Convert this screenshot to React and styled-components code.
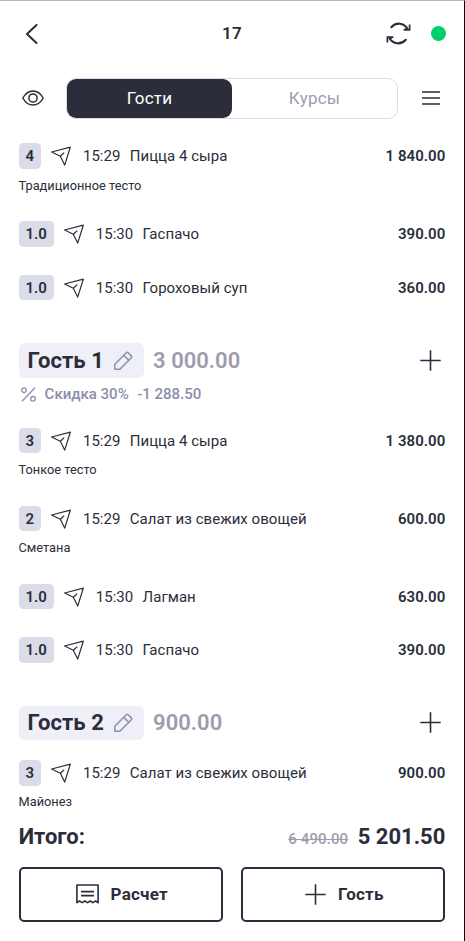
import styled, { createGlobalStyle } from "styled-components";

const colors = {
  dark: "#2b2e3a",
  muted: "#9f9bae",
  discount: "#8b8eac",
  badge: "#dadce9",
  light: "#efeff7",
  border: "#dbdbe9",
  green: "#00d06c",
};

const GlobalStyle = createGlobalStyle`
  * {
    box-sizing: border-box;
  }

  body {
    margin: 0;
    background: #fff;
    color: ${colors.dark};
    font-family: Roboto, "Liberation Sans", sans-serif;
  }

  button {
    padding: 0;
    border: 0;
    background: none;
    color: inherit;
    font-family: inherit;
  }

  svg {
    display: block;
    flex-shrink: 0;
    fill: none;
    stroke: currentColor;
  }
`;

const Screen = styled.div`
  display: flex;
  flex-direction: column;
  width: 465px;
  height: 941px;
  border-top: 1px solid #b7b7b7;
  border-right: 1px solid #06061f;
  background: #fff;
  overflow: hidden;
`;

const Header = styled.header`
  display: grid;
  grid-template-columns: 1fr auto 1fr;
  align-items: center;
  flex-shrink: 0;
  height: 65px;
  padding: 0 18px 0 24px;
`;

const Title = styled.h1`
  margin: -2px 0 0;
  padding-right: 6px;
  font-size: 17px;
  font-weight: 600;
  letter-spacing: 0.2px;
`;

const HeaderActions = styled.div`
  display: flex;
  justify-content: flex-end;
  align-items: center;
  gap: 20px;
`;

const StatusDot = styled.span`
  width: 15px;
  height: 15px;
  border-radius: 50%;
  background: ${colors.green};
`;

const Toolbar = styled.div`
  display: flex;
  align-items: center;
  flex-shrink: 0;
  height: 63.5px;
  padding: 1px 24px 0 22px;
`;

const Tabs = styled.div`
  display: flex;
  width: 332px;
  height: 41px;
  margin: 0 auto 0 22px;
  border: 1px solid ${colors.border};
  border-radius: 10px;
`;

const Tab = styled.button`
  flex: 1;
  border-radius: 9px;
  background: ${({ $active }) => ($active ? colors.dark : "transparent")};
  color: ${({ $active }) => ($active ? "#fff" : colors.muted)};
  font-size: 17px;
  letter-spacing: 0.2px;
`;

const List = styled.main`
  flex: 1;
  min-height: 0;
  overflow: hidden;
  padding: 0 18.7px 0 18.5px;
`;

const Item = styled.div`
  height: ${({ $tall }) => ($tall ? "78px" : "53.4px")};
`;

const ItemRow = styled.div`
  display: flex;
  align-items: center;
  height: 53.4px;
  font-size: 15px;
`;

const Badge = styled.span`
  display: flex;
  align-items: center;
  justify-content: center;
  height: 25.5px;
  margin-right: 10.1px;
  padding: 0 6.9px;
  border-radius: 4.5px;
  background: ${colors.badge};
  font-weight: 600;
`;

const Time = styled.span`
  margin: 0 9.4px 0 12px;
`;

const Name = styled.span`
  flex: 1;
  letter-spacing: 0.04px;
`;

const Price = styled.span`
  font-weight: 600;
  letter-spacing: 0.05px;
`;

const Note = styled.div`
  margin-top: -6.4px;
  font-size: 12.8px;
  line-height: 18px;
`;

const GuestHeader = styled.div`
  display: flex;
  align-items: center;
  height: 34.6px;
  margin-top: 29px;
  padding-right: 4px;
`;

const GuestName = styled.div`
  display: flex;
  align-items: center;
  gap: 10px;
  height: 100%;
  padding: 0 11px 0 9px;
  border-radius: 6px;
  background: ${colors.light};
  font-size: 22px;
  font-weight: 700;
  letter-spacing: 0.05px;

  svg {
    color: ${colors.discount};
  }
`;

const GuestSum = styled.span`
  flex: 1;
  margin-left: 9.3px;
  color: ${colors.muted};
  font-size: 22px;
  font-weight: 600;
`;

const Discount = styled.div`
  display: flex;
  align-items: center;
  gap: 8.5px;
  height: 30px;
  padding: 3px 0 0 2.6px;
  color: ${colors.discount};
  font-size: 15px;
  font-weight: 500;
`;

const GuestItems = styled.div`
  padding-top: 6px;
`;

const Footer = styled.footer`
  flex-shrink: 0;
  height: 130px;
  padding: 0 18.7px;
`;

const Total = styled.div`
  display: flex;
  align-items: baseline;
  height: 55.7px;
  padding-top: 12.5px;
  font-size: 22px;
  font-weight: 700;
`;

const OldTotal = styled.span`
  margin: 0 9.5px 0 auto;
  color: ${colors.muted};
  font-size: 15px;
  font-weight: 500;
  letter-spacing: 0.1px;
  text-decoration: line-through;
`;

const Buttons = styled.div`
  display: grid;
  grid-template-columns: 1fr 1fr;
  gap: 18.6px;
`;

const Button = styled.button`
  display: flex;
  align-items: center;
  justify-content: center;
  gap: 12px;
  height: 55px;
  padding-left: 2px;
  border: 2px solid ${colors.dark};
  border-radius: 5px;
  font-size: 17px;
  font-weight: 700;
  letter-spacing: 0.2px;
`;

const BackIcon = () => (
  <svg width="14" height="20" strokeWidth="2" strokeLinecap="round">
    <path d="M12.5 1 L3 10 L12.5 19" />
  </svg>
);

const RefreshIcon = () => (
  <svg width="25" height="23" strokeWidth="2.1" strokeLinecap="round">
    <path d="M5.3 5.2 C10 0 18 0.5 21.6 7" />
    <path d="M23.6 2.4 V8 H17.8 L21.6 6.4" strokeWidth="1.7" strokeLinecap="butt" />
    <path d="M19.8 17.8 C15 23 7 22.5 3.4 16" />
    <path d="M1.4 20.6 V15 H7.2 L3.4 16.6" strokeWidth="1.7" strokeLinecap="butt" />
  </svg>
);

const EyeIcon = () => (
  <svg width="22" height="16" strokeWidth="1.5">
    <path d="M0.8 8 C3.5 3.2 7 0.9 11 0.9 S18.5 3.2 21.2 8 C18.5 12.8 15 15.1 11 15.1 S3.5 12.8 0.8 8 Z" />
    <circle cx="11" cy="8" r="4.1" />
  </svg>
);

const MenuIcon = () => (
  <svg width="18" height="14" strokeWidth="1.4">
    <path d="M0 1 H18 M0 7 H18 M0 13 H18" />
  </svg>
);

const SendIcon = () => (
  <svg width="20" height="20" strokeWidth="1.2" strokeLinejoin="round">
    <path d="M0.6 6 L19.3 1.2 L13.7 19.1 L9.3 10.2 Z M9.3 10.2 L13.2 6.6" />
  </svg>
);

const PencilIcon = () => (
  <svg width="19" height="19" strokeWidth="1.5" strokeLinejoin="round">
    <path d="M0.8 18.2 V13.2 L12.3 1.7 Q13.2 0.8 14.1 1.7 L17.3 4.9 Q18.2 5.8 17.3 6.7 L5.8 18.2 Z" />
    <path d="M9.7 4.3 L14.7 9.3" />
  </svg>
);

const PercentIcon = () => (
  <svg width="15" height="15" strokeWidth="1.3">
    <circle cx="3" cy="3.2" r="2.3" />
    <circle cx="12" cy="11.8" r="2.3" />
    <path d="M1 14.3 L14 0.7" />
  </svg>
);

const PlusIcon = () => (
  <svg width="21" height="21" strokeWidth="1.6">
    <path d="M10.5 0.3 V20.7 M0.3 10.5 H20.7" />
  </svg>
);

const ReceiptIcon = () => (
  <svg width="23" height="20" strokeWidth="1.6" strokeLinejoin="round">
    <path d="M0.9 19.3 V1 H22.1 V19.3" />
    <path d="M0.9 18.6 L3.4 17 L6.2 18.6 L8.8 17 L11.5 18.6 L14.2 17 L16.8 18.6 L19.6 17 L22.1 18.6" />
    <path d="M5 7.6 H18 M5 11.6 H18" />
  </svg>
);

const commonItems = [
  { count: "4", time: "15:29", name: "Пицца 4 сыра", price: "1 840.00", note: "Традиционное тесто" },
  { count: "1.0", time: "15:30", name: "Гаспачо", price: "390.00" },
  { count: "1.0", time: "15:30", name: "Гороховый суп", price: "360.00" },
];

const guests = [
  {
    name: "Гость 1",
    sum: "3 000.00",
    discount: "Скидка 30%",
    discountSum: "-1 288.50",
    items: [
      { count: "3", time: "15:29", name: "Пицца 4 сыра", price: "1 380.00", note: "Тонкое тесто" },
      { count: "2", time: "15:29", name: "Салат из свежих овощей", price: "600.00", note: "Сметана" },
      { count: "1.0", time: "15:30", name: "Лагман", price: "630.00" },
      { count: "1.0", time: "15:30", name: "Гаспачо", price: "390.00" },
    ],
  },
  {
    name: "Гость 2",
    sum: "900.00",
    items: [
      { count: "3", time: "15:29", name: "Салат из свежих овощей", price: "900.00", note: "Майонез" },
    ],
  },
];

const OrderItem = ({ count, time, name, price, note }) => (
  <Item $tall={Boolean(note)}>
    <ItemRow>
      <Badge>{count}</Badge>
      <SendIcon />
      <Time>{time}</Time>
      <Name>{name}</Name>
      <Price>{price}</Price>
    </ItemRow>
    {note && <Note>{note}</Note>}
  </Item>
);

const Guest = ({ name, sum, discount, discountSum, items }) => (
  <section>
    <GuestHeader>
      <GuestName>
        {name}
        <PencilIcon />
      </GuestName>
      <GuestSum>{sum}</GuestSum>
      <button type="button" aria-label="Добавить">
        <PlusIcon />
      </button>
    </GuestHeader>
    {discount && (
      <Discount>
        <PercentIcon />
        <span>{discount}</span>
        <span>{discountSum}</span>
      </Discount>
    )}
    <GuestItems>
      {items.map((item, i) => (
        <OrderItem key={i} {...item} />
      ))}
    </GuestItems>
  </section>
);

const App = () => {
  return (
    <>
      <GlobalStyle />
      <Screen>
        <Header>
          <BackIcon />
          <Title>17</Title>
          <HeaderActions>
            <RefreshIcon />
            <StatusDot />
          </HeaderActions>
        </Header>
        <Toolbar>
          <EyeIcon />
          <Tabs>
            <Tab type="button" $active>
              Гости
            </Tab>
            <Tab type="button">Курсы</Tab>
          </Tabs>
          <MenuIcon />
        </Toolbar>
        <List>
          {commonItems.map((item, i) => (
            <OrderItem key={i} {...item} />
          ))}
          {guests.map((guest) => (
            <Guest key={guest.name} {...guest} />
          ))}
        </List>
        <Footer>
          <Total>
            <span>Итого:</span>
            <OldTotal>6 490.00</OldTotal>
            <span>5 201.50</span>
          </Total>
          <Buttons>
            <Button type="button">
              <ReceiptIcon />
              Расчет
            </Button>
            <Button type="button">
              <PlusIcon />
              Гость
            </Button>
          </Buttons>
        </Footer>
      </Screen>
    </>
  );
};

export default App;
